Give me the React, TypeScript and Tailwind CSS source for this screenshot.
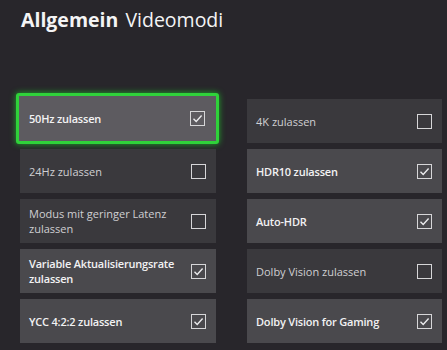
const left = [
  { label: "50Hz zulassen", checked: true, focused: true },
  { label: "24Hz zulassen", checked: false },
  { label: "Modus mit geringer Latenz zulassen", checked: false },
  { label: "Variable Aktualisierungsrate zulassen", checked: true },
  { label: "YCC 4:2:2 zulassen", checked: true },
];

const right = [
  { label: "4K zulassen", checked: false },
  { label: "HDR10 zulassen", checked: true },
  { label: "Auto-HDR", checked: true },
  { label: "Dolby Vision zulassen", checked: false },
  { label: "Dolby Vision for Gaming", checked: true },
];

function Box({ checked }: { checked: boolean }) {
  return (
    <span className="flex h-[15px] w-[15px] shrink-0 items-center justify-center border-[1.5px] border-[#d6d6d8]">
      {checked && (
        <svg width="11" height="11" viewBox="0 0 11 11" fill="none">
          <path d="M1.5 5.8 L4.2 8.4 L9.6 2.6" stroke="#ececee" strokeWidth="1.4" />
        </svg>
      )}
    </span>
  );
}

type Item = { label: string; checked: boolean; focused?: boolean };

function Option({ item }: { item: Item }) {
  const text = item.checked
    ? "font-semibold tracking-[-0.2px] text-[#f2f2f3]"
    : "text-[#cfcfd2]";
  if (item.focused) {
    return (
      <div className="-mt-[6px] -mb-[1px] -ml-[4px] -mr-[3px] flex h-[51px] items-center justify-between rounded-[3px] border-[3px] border-[#2fd23a] bg-[#5d5b60] pl-[10px] pr-[11px] shadow-[0_0_6px_#1fa82a]">
        <span className={`text-[11px] leading-[15px] ${text}`}>{item.label}</span>
        <Box checked={item.checked} />
      </div>
    );
  }
  return (
    <div
      className={`flex h-[44px] items-center justify-between pl-[9px] pr-[10px] ${
        item.checked ? "bg-[#4a494d]" : "bg-[#3a393d]"
      }`}
    >
      <span className={`max-w-[160px] text-[11px] leading-[15px] ${text}`}>{item.label}</span>
      <Box checked={item.checked} />
    </div>
  );
}

export default function App() {
  return (
    <div
      className="h-[350px] w-[447px] overflow-hidden bg-[#28262b]"
      style={{ fontFamily: '"Open Sans", "Noto Sans", sans-serif' }}
    >
      <h1 className="pl-[21px] pt-[6px] text-[19.5px] leading-[28px] text-[#f4f4f5]">
        <span className="font-bold">Allgemein</span>{" "}
        <span className="ml-[2px]">Videomodi</span>
      </h1>
      <div className="mt-[65px] grid grid-cols-[196px_195px] gap-x-[31px] pl-[20px]">
        <div className="flex flex-col gap-[6px]">
          {left.map((it) => (
            <Option key={it.label} item={it} />
          ))}
        </div>
        <div className="flex flex-col gap-[6px]">
          {right.map((it) => (
            <Option key={it.label} item={it} />
          ))}
        </div>
      </div>
    </div>
  );
}
